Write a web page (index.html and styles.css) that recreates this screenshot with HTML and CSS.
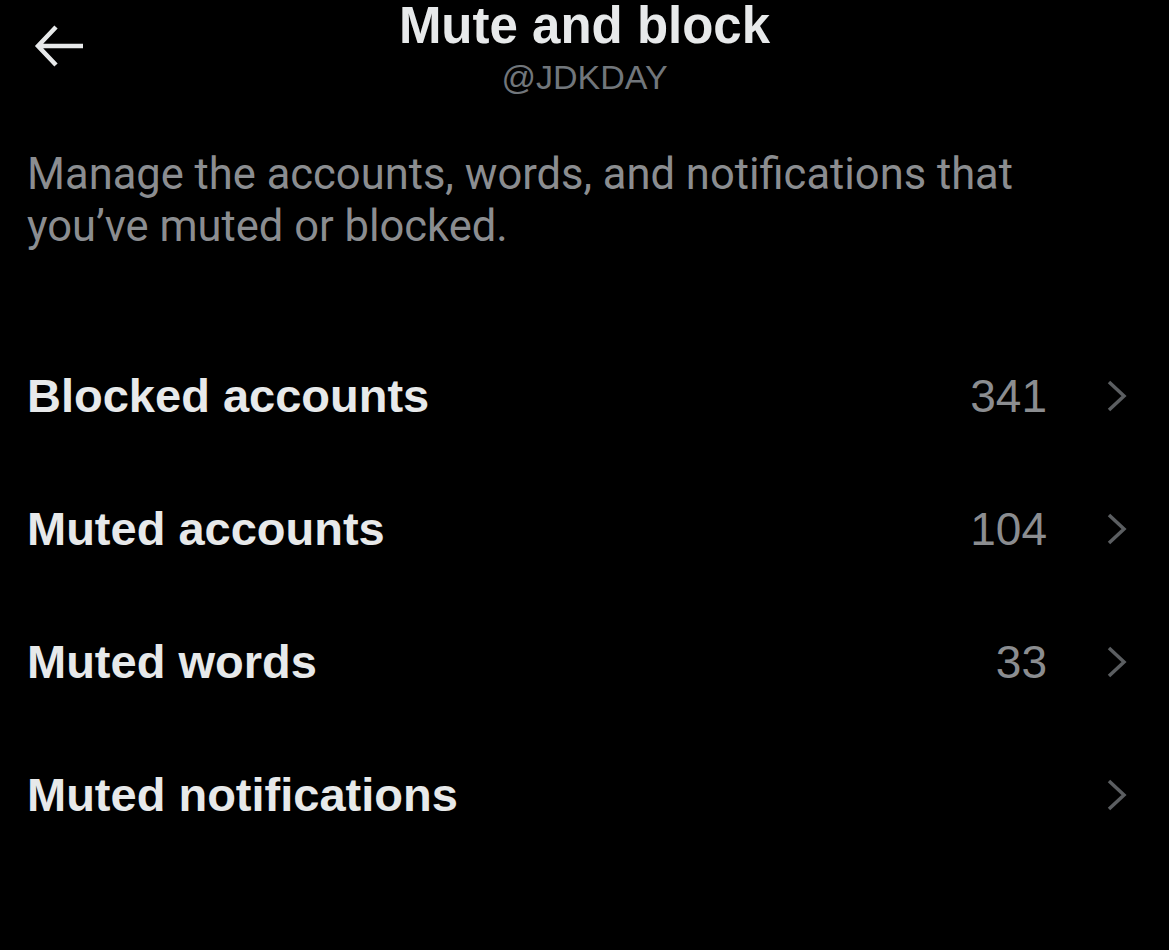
FILE: index.html
```html
<!DOCTYPE html>
<html lang="en">
<head>
	<meta charset="UTF-8">
	<meta name="viewport" content="width=device-width, initial-scale=1.0">
	<title>Mute and block</title>
	<link rel="stylesheet" href="styles.css">
</head>
<body>
	<div class="header">
		<div class="back">
			<svg width="54" height="48" viewBox="0 0 54 48"><path d="M52 24H7M25 5L7 24l18 19" fill="none" stroke="#e7e9ea" stroke-width="4.5"/></svg>
		</div>
		<div class="titles">
			<div class="title">Mute and block</div>
			<div class="handle">@JDKDAY</div>
		</div>
	</div>
	<p class="desc">Manage the accounts, words, and notifications that you’ve muted or blocked.</p>
	<ul class="list">
		<li class="row"><span class="label">Blocked accounts</span><span class="count">341</span><svg class="chev" width="24" height="34" viewBox="0 0 24 34"><path d="M4 3l15 14L4 31" fill="none" stroke="#5b5e61" stroke-width="3.5"/></svg></li>
		<li class="row"><span class="label">Muted accounts</span><span class="count">104</span><svg class="chev" width="24" height="34" viewBox="0 0 24 34"><path d="M4 3l15 14L4 31" fill="none" stroke="#5b5e61" stroke-width="3.5"/></svg></li>
		<li class="row"><span class="label">Muted words</span><span class="count">33</span><svg class="chev" width="24" height="34" viewBox="0 0 24 34"><path d="M4 3l15 14L4 31" fill="none" stroke="#5b5e61" stroke-width="3.5"/></svg></li>
		<li class="row"><span class="label">Muted notifications</span><span class="count"></span><svg class="chev" width="24" height="34" viewBox="0 0 24 34"><path d="M4 3l15 14L4 31" fill="none" stroke="#5b5e61" stroke-width="3.5"/></svg></li>
	</ul>
</body>
</html>
```
FILE: styles.css
```css
html, body { margin: 0; background: #000; height: 100%; }
body { font-family: 'Liberation Sans', Arial, sans-serif; color: #e7e9ea; overflow: hidden; }
.header { position: relative; height: 100px; display: flex; justify-content: center; }
.back { position: absolute; left: 31px; top: 22px; }
.back svg { display: block; }
.titles { display: flex; flex-direction: column; align-items: center; }
.title { font-size: 51px; font-weight: bold; line-height: 52px; margin-top: 0; }
.handle { font-size: 34px; line-height: 40px; color: #71767b; margin-top: 5px; }
.desc { margin: 49px 0 0 27px; width: 1100px; font-family: 'Roboto', sans-serif; font-size: 43.5px; line-height: 52px; color: #8b8d90; }
.list { list-style: none; margin: 76px 0 0 0; padding: 0 40px 0 27px; }
.row { display: flex; align-items: center; height: 133px; }
.label { flex: 1; font-size: 47px; font-weight: bold; }
.count { font-size: 46px; color: #8b8d90; margin-right: 58px; }
.chev { display: block; margin-right: 0; }
```
